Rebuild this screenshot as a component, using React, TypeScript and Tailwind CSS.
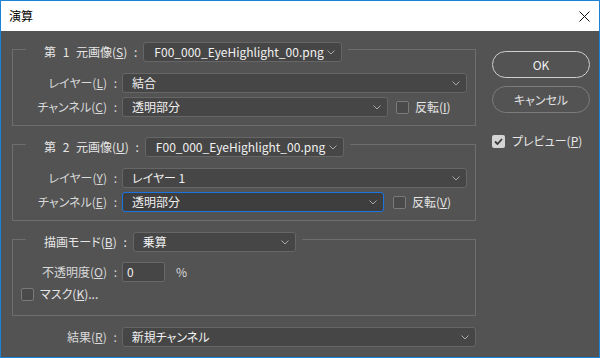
import type { ReactNode } from 'react';

const jp = "font-['Noto_Sans_CJK_JP','Noto_Sans',sans-serif] [font-feature-settings:'palt']";

function Chevron() {
  return (
    <svg width="8" height="5" viewBox="0 0 8 5" className="shrink-0">
      <polyline points="0.5,0.5 4,4 7.5,0.5" fill="none" stroke="#a8a8a8" strokeWidth="1" />
    </svg>
  );
}

function Select({ value, className = '', focused = false }: { value: string; className?: string; focused?: boolean }) {
  return (
    <div
      className={`flex h-[20px] items-center justify-between rounded-[3px] border pl-[9px] pr-[6px] text-[12px] text-[#f0f0f0] ${
        focused ? 'border-[#1a74e0] bg-[#3e3e3e]' : 'border-[#666666] bg-[#464646]'
      } ${className}`}
    >
      <span className="whitespace-nowrap">{value}</span>
      <Chevron />
    </div>
  );
}

function Check({ checked = false }: { checked?: boolean }) {
  if (checked) {
    return (
      <div className="flex h-[13px] w-[13px] shrink-0 items-center justify-center rounded-[2px] bg-[#d4d4d4]">
        <svg width="9" height="7" viewBox="0 0 9 7">
          <polyline points="1,3.5 3.5,6 8,1" fill="none" stroke="#3a3a3a" strokeWidth="1.8" />
        </svg>
      </div>
    );
  }
  return <div className="h-[13px] w-[13px] shrink-0 rounded-[2px] border border-[#7a7a7a] bg-[#4a4a4a]" />;
}

function Label({ text, k, tail = ' :', className = '' }: { text: string; k: string; tail?: string; className?: string }) {
  return (
    <span className={`whitespace-nowrap text-[12px] text-[#d9d9d9] [word-spacing:4px] ${className}`}>
      {text}(<span className="underline">{k}</span>){tail}
    </span>
  );
}

function Group({ title, children }: { title: ReactNode; children: ReactNode }) {
  return (
    <fieldset className="border border-[#6e6e6e]">
      <legend className="ml-[13px] flex items-center gap-[6px] pl-[18px] pr-[6px] pt-[5px]">{title}</legend>
      {children}
    </fieldset>
  );
}

function Row({ label, children }: { label: ReactNode; children: ReactNode }) {
  return (
    <div className="flex h-[20px] items-center">
      <div className="w-[104px] text-right">{label}</div>
      <div className="ml-[5px] flex items-center">{children}</div>
    </div>
  );
}

export default function App() {
  return (
    <div className={`flex h-[358px] w-[600px] flex-col border border-[#1883d7] bg-[#535353] text-[12px] leading-[18px] ${jp}`}>
      <div className="flex h-[30px] shrink-0 items-center justify-between bg-white pl-[8px] pr-[9px]">
        <span className="text-[12px] text-black">演算</span>
        <svg width="11" height="11" viewBox="0 0 11 11">
          <path d="M0.5 0.5 L10.5 10.5 M10.5 0.5 L0.5 10.5" stroke="#111" strokeWidth="1" />
        </svg>
      </div>

      <div className="flex flex-1">
        <div className="ml-[11px] flex w-[464px] flex-col pt-[6px]">
          <Group
            title={
              <>
                <Label text="第 1 元画像" k="S" className="text-[#e6e6e6]" />
                <Select value="F00_000_EyeHighlight_00.png" className="w-[199px] pl-[10px]" />
              </>
            }
          >
            <div className="mt-[11px] flex flex-col gap-[4px] pb-[8px]">
              <Row label={<Label text="レイヤー" k="L" />}>
                <Select value="結合" className="w-[345px]" />
              </Row>
              <Row label={<Label text="チャンネル" k="C" />}>
                <Select value="透明部分" className="w-[266px]" />
                <div className="ml-[8px] flex items-center gap-[6px]">
                  <Check />
                  <Label text="反転" k="I" tail="" className="text-[#e6e6e6]" />
                </div>
              </Row>
            </div>
          </Group>

          <div className="mt-[6px]">
            <Group
              title={
                <>
                  <Label text="第 2 元画像" k="U" className="text-[#e6e6e6]" />
                  <Select value="F00_000_EyeHighlight_00.png" className="w-[199px] pl-[10px]" />
                </>
              }
            >
              <div className="mt-[11px] flex flex-col gap-[4px] pb-[8px]">
                <Row label={<Label text="レイヤー" k="Y" />}>
                  <Select value="レイヤー 1" className="w-[345px]" />
                </Row>
                <Row label={<Label text="チャンネル" k="E" />}>
                  <Select value="透明部分" className="w-[262px]" focused />
                  <div className="ml-[9px] flex items-center gap-[6px]">
                    <Check />
                    <Label text="反転" k="V" tail="" className="text-[#e6e6e6]" />
                  </div>
                </Row>
              </div>
            </Group>
          </div>

          <div className="mt-[6px]">
            <Group
              title={
                <>
                  <Label text="描画モード" k="B" className="text-[#e6e6e6]" />
                  <Select value="乗算" className="w-[163px]" />
                </>
              }
            >
              <div className="mt-[10px] flex flex-col pb-[13px]">
                <Row label={<Label text="不透明度" k="O" />}>
                  <div className="flex h-[20px] w-[43px] items-center rounded-[2px] border border-[#686868] bg-[#464646] pl-[4px] text-[12px] text-[#f0f0f0]">
                    0
                  </div>
                  <span className="ml-[11px] text-[12px] text-[#d9d9d9]">%</span>
                </Row>
                <div className="ml-[8px] mt-[4px] flex h-[16px] items-center gap-[6px]">
                  <Check />
                  <Label text="マスク" k="K" tail="..." className="text-[#e6e6e6]" />
                </div>
              </div>
            </Group>
          </div>

          <div className="mt-[11px] flex h-[20px] items-center">
            <div className="w-[105px] text-right">
              <Label text="結果" k="R" />
            </div>
            <Select value="新規チャンネル" className="ml-[5px] w-[355px]" />
          </div>
        </div>

        <div className="ml-[16px] flex w-[98px] flex-col pt-[20px]">
          <div className="flex h-[27px] items-center justify-center rounded-full border border-[#cfcfcf] text-[12px] text-[#f0f0f0]">
            OK
          </div>
          <div className="mt-[8px] flex h-[27px] items-center justify-center rounded-full border border-[#7c7c7c] text-[12px] text-[#e0e0e0]">
            キャンセル
          </div>
          <div className="mt-[19px] flex items-center gap-[7px]">
            <Check checked />
            <Label text="プレビュー" k="P" tail="" className="text-[#e6e6e6]" />
          </div>
        </div>
      </div>
    </div>
  );
}
